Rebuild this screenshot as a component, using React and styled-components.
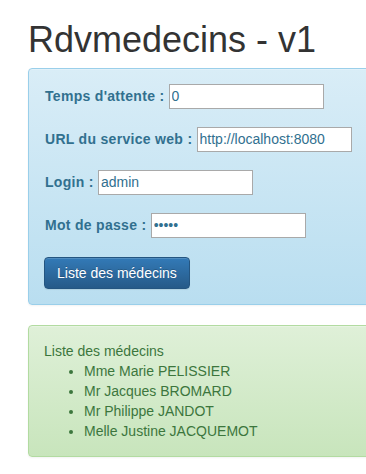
import React from 'react';
import styled, {createGlobalStyle} from 'styled-components';

const infoText = '#31708f';
const successText = '#3c763d';

const doctors = [
  'Mme Marie PELISSIER',
  'Mr Jacques BROMARD',
  'Mr Philippe JANDOT',
  'Melle Justine JACQUEMOT'
];

const fields = [
  {label: "Temps d'attente :", value: '0'},
  {label: 'URL du service web :', value: 'http://localhost:8080'},
  {label: 'Login :', value: 'admin'},
  {label: 'Mot de passe :', value: 'admin', type: 'password'}
];

const GlobalStyle = createGlobalStyle`
  html, body {
    margin: 0;
    background: #fff;
    overflow: hidden;
  }
  body {
    font-family: "Liberation Sans", Arial, sans-serif;
    font-size: 14px;
    line-height: 20px;
    color: #333;
  }
`;

const Page = styled.div`
  padding-left: 28px;
  overflow: hidden;
`;

const Title = styled.h1`
  margin: 20px 0 8px;
  font-size: 36px;
  font-weight: 500;
  line-height: 1.1;
  color: #333;
`;

const Alert = styled.div`
  width: 420px;
  margin-bottom: 20px;
  padding: 15px;
  border: 1px solid ${p => p.$variant === 'success' ? '#b2dba1' : '#9acfea'};
  border-radius: 4px;
  color: ${p => p.$variant === 'success' ? successText : infoText};
  background: ${p => p.$variant === 'success'
    ? 'linear-gradient(to bottom, #dff0d8 0, #c8e5bc 100%)'
    : 'linear-gradient(to bottom, #d9edf7 0, #b9def0 100%)'};
  box-shadow: inset 0 1px 0 rgba(255, 255, 255, .25), 0 1px 2px rgba(0, 0, 0, .05);
`;

const Form = styled.form`
  display: flex;
  flex-direction: column;
  align-items: flex-start;
  gap: 18px;
`;

const Row = styled.div`
  display: flex;
  align-items: center;
  height: 25px;
  padding-left: 1px;
`;

const Label = styled.label`
  font-weight: bold;
  letter-spacing: 0.3px;
  white-space: pre;
`;

const Input = styled.input`
  box-sizing: border-box;
  width: 155px;
  height: 25px;
  margin: 0;
  padding: 1px 2px;
  border: 1px solid #a9a9a9;
  background: #fff;
  font: inherit;
  color: ${infoText};
  outline: none;
`;

const Button = styled.button`
  height: 32px;
  margin-top: 1px;
  padding: 0 12px;
  border: 1px solid #245580;
  border-radius: 4px;
  background: linear-gradient(to bottom, #337ab7 0, #265a88 100%);
  color: #fff;
  font: inherit;
  text-shadow: 0 -1px 0 rgba(0, 0, 0, .2);
  box-shadow: inset 0 1px 0 rgba(255, 255, 255, .15), 0 1px 1px rgba(0, 0, 0, .075);
  cursor: pointer;
`;

const List = styled.ul`
  margin: 0;
  padding-left: 40px;
`;

const App = () => (
  <Page>
    <GlobalStyle />
    <Title>Rdvmedecins - v1</Title>
    <Alert $variant="info">
      <Form onSubmit={e => e.preventDefault()}>
        {fields.map((f, i) => (
          <Row key={i}>
            <Label>{f.label} </Label>
            <Input type={f.type || 'text'} defaultValue={f.value} />
          </Row>
        ))}
        <Button type="submit">Liste des médecins</Button>
      </Form>
    </Alert>
    <Alert $variant="success">
      Liste des médecins
      <List>
        {doctors.map(d => <li key={d}>{d}</li>)}
      </List>
    </Alert>
  </Page>
);

export default App;
